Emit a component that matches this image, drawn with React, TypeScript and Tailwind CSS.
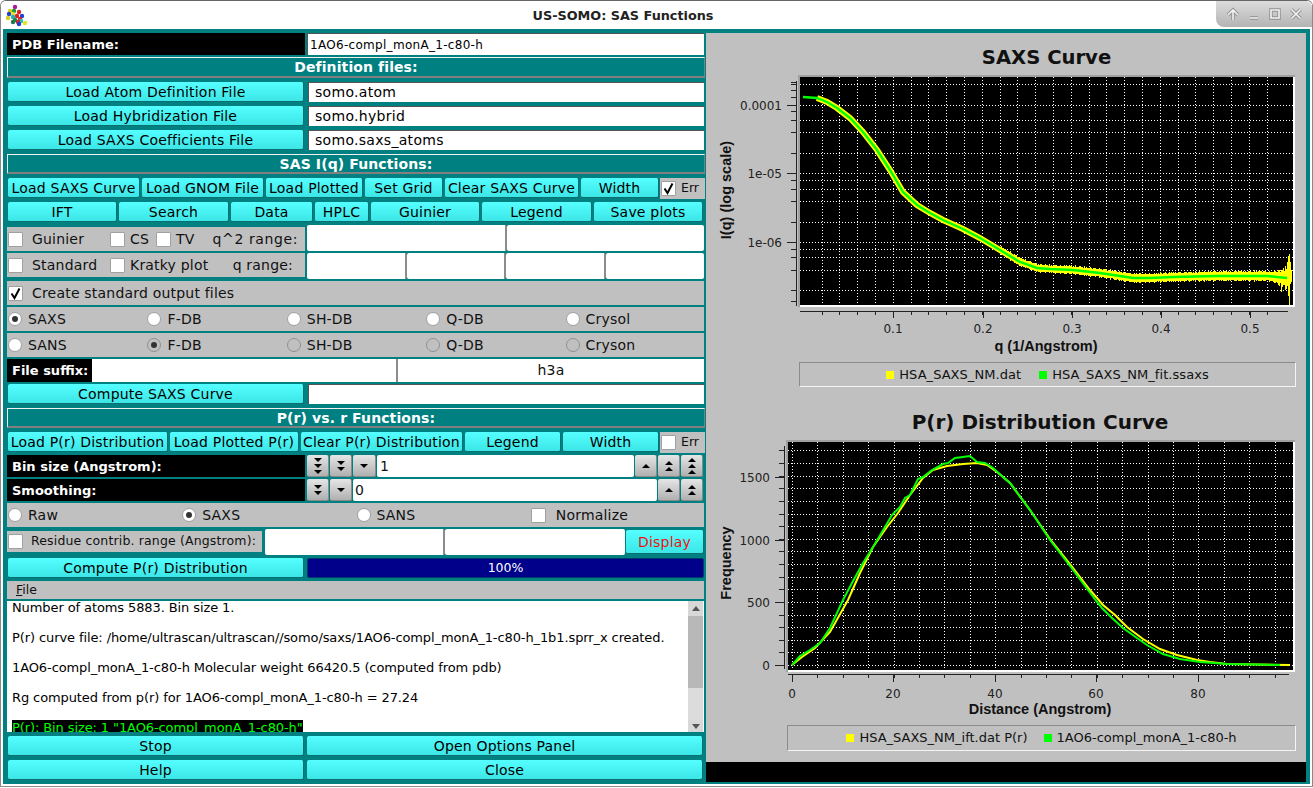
import type { ReactNode } from 'react';

const pts = (a: number[][]) => a.map((p) => p.join(',')).join(' ');

// piecewise linear lookup for the noisy band around the SAXS curve
const lerp = (a: number[][], x: number) => {
  for (let i = 1; i < a.length; i++) {
    if (x <= a[i][0]) {
      const t = (x - a[i - 1][0]) / (a[i][0] - a[i - 1][0]);
      return a[i - 1][1] + t * (a[i][1] - a[i - 1][1]);
    }
  }
  return a[a.length - 1][1];
};

const saxsFit = [
  [803, 97], [817, 98], [827, 102], [837, 108], [850, 118], [863, 132], [877, 150], [890, 170], [903, 192],
  [917, 205], [930, 213], [943, 220], [963, 229], [980, 238], [1000, 250], [1020, 262], [1037, 268], [1050, 269],
  [1073, 270], [1100, 273], [1133, 278], [1150, 278], [1173, 277], [1217, 276], [1267, 276], [1287, 278],
];

const prFit = [
  [792, 665], [800, 656], [810, 650], [820, 643], [830, 628], [843, 600], [852, 583], [863, 563], [873, 547], [882, 532],
  [892, 515], [900, 507], [905, 498], [910, 495], [918, 479], [923, 477], [932, 470], [943, 464], [948, 463], [955, 458],
  [963, 457], [970, 456], [977, 462], [985, 463], [993, 468], [1003, 477], [1010, 483], [1030, 510], [1050, 540],
  [1070, 566], [1088, 590], [1097, 602], [1102, 608], [1112, 618], [1123, 628], [1137, 638], [1147, 645], [1163, 654],
  [1180, 659], [1200, 662], [1227, 664], [1280, 665],
];

const prIft = [
  [792, 665], [802, 657], [815, 648], [830, 632], [848, 600], [860, 573], [873, 547], [887, 527], [898, 513], [910, 495],
  [923, 478], [933, 470], [947, 466], [963, 464], [977, 463], [987, 465], [997, 472], [1003, 477], [1010, 483], [1030, 510],
  [1050, 539], [1070, 564], [1090, 590], [1103, 605], [1115, 615], [1127, 627], [1143, 639], [1160, 649], [1177, 655],
  [1197, 660], [1210, 662], [1227, 664], [1290, 665],
];

const noise = Array.from({ length: 290 }, (_, i) => {
  const x = 1000 + i;
  const y = lerp(saxsFit, x);
  const amp = 3 + (i / 290) * 1.2 + Math.abs(Math.sin(i * 1.7) * Math.cos(i * 0.63)) * 1.6;
  const low = i > 272 ? Math.abs(Math.sin(i * 2.3)) * (i - 272) * 0.5 : 0;
  return { x, y1: y - amp - low * 0.6, y2: y + amp + low };
});

function Btn({ className = '', children }: { className?: string; children: ReactNode }) {
  return (
    <div
      className={`h-[20px] shrink-0 flex items-center justify-center pt-[1px] rounded-[2px] bg-linear-to-b from-[#55ffff] to-[#3de6e6] border-b border-r border-[#0b6f6f] text-[14px] tracking-[0.2px] text-black whitespace-nowrap overflow-hidden ${className}`}
    >
      {children}
    </div>
  );
}

function Field({ className = '', children }: { className?: string; children?: ReactNode }) {
  return (
    <div
      className={`flex items-center bg-white border-t border-l border-[#555] border-b-[#e8e8e8] border-r-[#e8e8e8] text-[14px] tracking-[0.3px] text-black whitespace-nowrap ${className}`}
    >
      {children}
    </div>
  );
}

// line edits separated by a QSplitter handle
function Split({ widths, h }: { widths: string[]; h: string }) {
  return (
    <div className={`flex ${h}`}>
      {widths.map((w, i) => (
        <div key={i} className={`bg-white rounded-[2px] border-r-2 border-[#8c8c8c] last:border-r-0 ${w}`} />
      ))}
    </div>
  );
}

function Check({ on = false }: { on?: boolean }) {
  return (
    <div className="w-[15px] h-[15px] shrink-0 bg-white border border-[#a0a0a0] rounded-[1px] flex items-center justify-center">
      {on && (
        <svg width="13" height="13" viewBox="0 0 13 13">
          <path d="M2.5 6.5 L5.5 11 L10.5 1.5" fill="none" stroke="#000" strokeWidth="2" />
        </svg>
      )}
    </div>
  );
}

function Radio({ on = false, off = false }: { on?: boolean; off?: boolean }) {
  return (
    <div
      className={`w-[14px] h-[14px] shrink-0 rounded-full border flex items-center justify-center ${
        off ? 'bg-[#c0c0c0] border-[#909090]' : 'bg-white border-[#a0a0a0]'
      }`}
    >
      {on && <div className="w-[6px] h-[6px] rounded-full bg-[#333]" />}
    </div>
  );
}

function RadioCell({ label, on, off }: { label: string; on?: boolean; off?: boolean }) {
  return (
    <div className="flex items-center gap-[6px] pl-[1px] text-[14px] tracking-[0.2px] text-[#111]">
      <Radio on={on} off={off} />
      {label}
    </div>
  );
}

function Header({ children, className = 'h-[20px]' }: { children: ReactNode; className?: string }) {
  return (
    <div
      className={`flex items-center justify-center pt-[1px] bg-[#008080] border-t border-l border-[#f0f0f0] border-b-2 border-r border-b-[#808080] border-r-[#808080] text-white font-bold text-[14px] tracking-[0.1px] ${className}`}
    >
      {children}
    </div>
  );
}

function Spin({ n, up = false, className = '' }: { n: number; up?: boolean; className?: string }) {
  return (
    <div
      className={`h-[22px] shrink-0 flex flex-col items-center justify-center rounded-[2px] bg-linear-to-b from-[#e6e6e6] to-[#b0b0b0] border-b border-r border-[#8a8a8a] ${className}`}
    >
      <svg width="10" height={n * 6} viewBox={`0 0 10 ${n * 6}`}>
        {Array.from({ length: n }).map((_, i) => (
          <path
            key={i}
            d={up ? `M1 ${i * 6 + 5} L5 ${i * 6 + 1} L9 ${i * 6 + 5} Z` : `M1 ${i * 6 + 1} L9 ${i * 6 + 1} L5 ${i * 6 + 5} Z`}
            fill="#000"
          />
        ))}
      </svg>
    </div>
  );
}

const dark = 'bg-black text-white font-bold text-[13px] whitespace-nowrap flex items-center';

function Molecule() {
  const balls = [
    ['#b0189a', 14, 6], ['#d8d020', 9, 10], ['#1a9a3a', 13, 10], ['#e02020', 18, 11], ['#2040d0', 8, 13], ['#e8e020', 12, 13],
    ['#e02020', 16, 15], ['#20b0c0', 12, 16], ['#d8d020', 7, 17], ['#2040d0', 21, 15], ['#e02020', 19, 18], ['#1a8a4a', 14, 19],
    ['#20c0c0', 20, 20], ['#e02020', 17, 21], ['#e8e020', 24, 22], ['#2040d0', 18, 23], ['#1a7a4a', 12, 21],
  ] as const;
  return (
    <svg width="29" height="28" viewBox="0 0 29 28" className="shrink-0">
      {balls.map(([c, x, y], i) => (
        <circle key={i} cx={x} cy={y} r="2.2" fill={c} />
      ))}
    </svg>
  );
}

function WinIcon({ d }: { d: string }) {
  return (
    <svg width="14" height="14" viewBox="0 0 14 14">
      <path d={d} fill="none" stroke="#8e8e8e" strokeWidth="3.4" />
      <path d={d} fill="none" stroke="#f4f4f4" strokeWidth="1.6" />
    </svg>
  );
}

const tick = { stroke: '#222', strokeWidth: 1, shapeRendering: 'crispEdges' as const };
const dots = { stroke: '#fff', strokeWidth: 1, strokeDasharray: '1 2', shapeRendering: 'crispEdges' as const };
const tickFont = { fontFamily: 'DejaVu Sans', fontSize: 12, fill: '#222' };
const axisFont = { fontFamily: 'Liberation Sans', fontSize: 14.5, fontWeight: 700, fill: '#111' };

function SaxsChart() {
  const decades = [105, 173.5, 242];
  const gridY = [84, 105, 120, 132, 153, 173, 180, 189, 201, 222, 242, 249, 257, 270, 290];
  const minorY = [82, 84, 90, 97, 111, 120, 132, 153, 180, 189, 201, 222, 249, 257, 270, 290, 301];
  const gridX = Array.from({ length: 26 }, (_, i) => 822 + i * 17.8);
  return (
    <svg width="600" height="286" viewBox="706 72 600 286" className="block">
      <rect x="798" y="75" width="497" height="232" fill="#fff" />
      <path d="M798 76 H1295 M799 75 V307" stroke="#a0a0a0" strokeWidth="2" />
      <rect x="800" y="77" width="493" height="228" fill="#000" />
      {gridY.map((y) => (
        <line key={y} x1="800" x2="1293" y1={y} y2={y} {...dots} />
      ))}
      {gridX.map((x) => (
        <line key={x} x1={x} x2={x} y1="77" y2="305" {...dots} />
      ))}
      <polyline points={pts(saxsFit.slice(1, 22))} fill="none" stroke="#ffff00" strokeWidth="6" />
      {noise.map((n) => (
        <line key={n.x} x1={n.x} x2={n.x} y1={n.y1} y2={n.y2} stroke="#ffff00" strokeWidth="1" shapeRendering="crispEdges" />
      ))}
      <path
        d="M1289 254 V305 M1288 256 V296 M1290 262 V284 M1287 262 V286 M1291 270 V282 M1285 266 V290 M1283 268 V284 M1281 270 V292 M1279 270 V286"
        stroke="#ffff00"
        strokeWidth="1"
        shapeRendering="crispEdges"
      />
      <polyline points={pts(saxsFit)} fill="none" stroke="#00ff00" strokeWidth="2.4" />

      <path d="M796.5 81 V306 M800 311.5 H1288" {...tick} />
      {decades.map((y) => (
        <line key={y} x1="787" x2="796" y1={y} y2={y} {...tick} />
      ))}
      {minorY.map((y) => (
        <line key={y} x1="791" x2="796" y1={y} y2={y} {...tick} />
      ))}
      {gridX.map((x) => (
        <line key={x} x1={x} x2={x} y1="311" y2="315" {...tick} />
      ))}
      {[893, 983, 1072, 1161, 1250].map((x) => (
        <line key={x} x1={x} x2={x} y1="311" y2="318" {...tick} />
      ))}
      <text x="782" y="110" textAnchor="end" {...tickFont}>0.0001</text>
      <text x="782" y="178" textAnchor="end" {...tickFont}>1e-05</text>
      <text x="782" y="247" textAnchor="end" {...tickFont}>1e-06</text>
      {['0.1', '0.2', '0.3', '0.4', '0.5'].map((l, i) => (
        <text key={l} x={[893, 983, 1072, 1161, 1250][i]} y="333" textAnchor="middle" {...tickFont}>{l}</text>
      ))}
      <text x="1046" y="351" textAnchor="middle" {...axisFont}>q (1/Angstrom)</text>
      <text transform="rotate(-90 731 190)" x="731" y="190" textAnchor="middle" {...axisFont}>I(q) (log scale)</text>
    </svg>
  );
}

function PrChart() {
  const gridY = Array.from({ length: 17 }, (_, i) => 665 - (i + 1) * 12.62).map(Math.round);
  const gridX = Array.from({ length: 19 }, (_, i) => 792 + (i + 1) * 25.4).map(Math.round);
  const major = [792, 893, 995, 1096, 1198];
  return (
    <svg width="600" height="284" viewBox="706 438 600 284" className="block">
      <rect x="786" y="440" width="509" height="232" fill="#fff" />
      <path d="M786 441 H1295 M787 440 V672" stroke="#a0a0a0" strokeWidth="2" />
      <rect x="788" y="442" width="505" height="228" fill="#000" />
      {[665, ...gridY].map((y) => (
        <line key={y} x1="788" x2="1293" y1={y} y2={y} {...dots} />
      ))}
      {[792, ...gridX].map((x) => (
        <line key={x} x1={x} x2={x} y1="442" y2="670" {...dots} />
      ))}
      <polyline points={pts(prIft)} fill="none" stroke="#ffff00" strokeWidth="2" />
      <polyline points={pts(prFit)} fill="none" stroke="#00ff00" strokeWidth="2" />

      <path d="M784.5 446 V669 M788 674.5 H1289" {...tick} />
      {gridY.map((y) => (
        <line key={y} x1="779" x2="784" y1={y} y2={y} {...tick} />
      ))}
      {[477, 540, 602, 665].map((y) => (
        <line key={y} x1="775" x2="784" y1={y} y2={y} {...tick} />
      ))}
      {gridX.map((x) => (
        <line key={x} x1={x} x2={x} y1="674" y2="678" {...tick} />
      ))}
      {major.map((x) => (
        <line key={x} x1={x} x2={x} y1="674" y2="682" {...tick} />
      ))}
      {[['1500', 477], ['1000', 540], ['500', 602], ['0', 665]].map(([l, y]) => (
        <text key={l} x="770" y={Number(y) + 5} textAnchor="end" {...tickFont}>{l}</text>
      ))}
      {['0', '20', '40', '60', '80'].map((l, i) => (
        <text key={l} x={major[i]} y="698" textAnchor="middle" {...tickFont}>{l}</text>
      ))}
      <text x="1040" y="714" textAnchor="middle" {...axisFont}>Distance (Angstrom)</text>
      <text transform="rotate(-90 731 563)" x="731" y="563" textAnchor="middle" {...axisFont}>Frequency</text>
    </svg>
  );
}

function LegendItem({ color, children }: { color: string; children: ReactNode }) {
  return (
    <div className="flex items-center gap-[5px]">
      <span className={`w-[8px] h-[8px] ${color}`} />
      {children}
    </div>
  );
}

export default function App() {
  return (
    <div className="w-[1313px] h-[787px] overflow-hidden bg-white rounded-t-[6px] border border-[#8a8a8a] border-t-[#666] font-['DejaVu_Sans',sans-serif]">
      {/* Title bar */}
      <div className="h-[28px] flex items-start bg-white">
        <Molecule />
        <div className="flex-1 pt-[5px] text-center text-[12.8px] font-bold text-[#222]">US-SOMO: SAS Functions</div>
        <div className="w-[96px] h-[26px] flex items-center justify-around px-[6px] rounded-bl-[8px] rounded-tr-[6px] bg-linear-to-b from-[#dcdcdc] to-[#b4b4b4]">
          <WinIcon d="M7 13 V3 M2 8 L7 3 L12 8" />
          <WinIcon d="M3 11 H11" />
          <WinIcon d="M3 3 H11 V11 H3 Z" />
          <WinIcon d="M2.5 2.5 L11.5 11.5 M11.5 2.5 L2.5 11.5" />
        </div>
      </div>

      {/* Teal body */}
      <div className="h-[755px] mx-[2px] flex bg-[#008080] pl-[4px] pt-[4px]">
        <div className="w-[698px] shrink-0 flex flex-col">
          <div className="flex h-[22px] gap-[2px]">
            <div className={`w-[298px] pl-[5px] pt-[1px] ${dark}`}>PDB Filename:</div>
            <Field className="w-[397px] pl-[2px] !text-[12px]">1AO6-compl_monA_1-c80-h</Field>
          </div>

          <div className="mt-[2px]">
            <Header className="h-[21px]">Definition files:</Header>
          </div>

          <div className="mt-[4px] flex flex-col gap-[4px]">
            {[
              ['Load Atom Definition File', 'somo.atom'],
              ['Load Hybridization File', 'somo.hybrid'],
              ['Load SAXS Coefficients File', 'somo.saxs_atoms'],
            ].map(([b, v]) => (
              <div key={b} className="flex gap-[4px] pl-[1px]">
                <Btn className="w-[296px]">{b}</Btn>
                <Field className="w-[396px] h-[20px] pl-[6px]">{v}</Field>
              </div>
            ))}
            <Header>SAS I(q) Functions:</Header>
            <div className="flex gap-[2px] pl-[1px] items-start">
              <Btn className="w-[132px]">Load SAXS Curve</Btn>
              <Btn className="w-[122px]">Load GNOM File</Btn>
              <Btn className="w-[97px]">Load Plotted</Btn>
              <Btn className="w-[78px]">Set Grid</Btn>
              <Btn className="w-[134px]">Clear SAXS Curve</Btn>
              <Btn className="w-[78px]">Width</Btn>
              <div className="w-[45px] h-[21px] -ml-[1px] -mb-[1px] bg-[#c0c0c0] flex items-center pl-[1px] gap-[5px] text-[12.5px] text-[#111]">
                <Check on />
                Err
              </div>
            </div>
            <div className="flex gap-[2px] pl-[1px]">
              <Btn className="w-[109px]">IFT</Btn>
              <Btn className="w-[110px]">Search</Btn>
              <Btn className="w-[82px]">Data</Btn>
              <Btn className="w-[54px]">HPLC</Btn>
              <Btn className="w-[109px]">Guinier</Btn>
              <Btn className="w-[110px]">Legend</Btn>
              <Btn className="w-[109px]">Save plots</Btn>
            </div>
          </div>

          <div className="mt-[3px] flex gap-[2px] items-start">
            <div className="mt-[2px] w-[298px] h-[24px] bg-[#c0c0c0] flex items-center pl-[1px] text-[14px] tracking-[0.2px] text-[#111]">
              <Check />
              <span className="ml-[9px] w-[78px]">Guinier</span>
              <Check />
              <span className="ml-[5px] w-[26px]">CS</span>
              <Check />
              <span className="ml-[5px]">TV</span>
              <span className="flex-1 text-right pr-[7px] whitespace-nowrap tracking-[0.6px]">q^2 range:</span>
            </div>
            <Split h="h-[26px] w-[397px]" widths={['w-[200px]', 'w-[197px]']} />
          </div>

          <div className="mt-[2px] flex gap-[2px] items-start">
            <div className="w-[298px] h-[24px] bg-[#c0c0c0] flex items-center pl-[1px] text-[14px] tracking-[0.2px] text-[#111]">
              <Check />
              <span className="ml-[9px] w-[78px]">Standard</span>
              <Check />
              <span className="ml-[5px] whitespace-nowrap">Kratky plot</span>
              <span className="flex-1 text-right pr-[12px] whitespace-nowrap">q range:</span>
            </div>
            <Split h="h-[26px] w-[397px]" widths={['w-[100px]', 'w-[99px]', 'w-[100px]', 'w-[98px]']} />
          </div>

          <div className="mt-[2px] h-[24px] w-[697px] bg-[#c0c0c0] flex items-center pl-[1px] text-[14px] tracking-[0.2px] text-[#111]">
            <Check on />
            <span className="ml-[9px]">Create standard output files</span>
          </div>

          <div className="mt-[2px] h-[24px] w-[697px] bg-[#c0c0c0] grid grid-cols-5 items-center">
            <RadioCell label="SAXS" on />
            <RadioCell label="F-DB" />
            <RadioCell label="SH-DB" />
            <RadioCell label="Q-DB" />
            <RadioCell label="Crysol" />
          </div>
          <div className="mt-[2px] h-[24px] w-[697px] bg-[#c0c0c0] grid grid-cols-5 items-center">
            <RadioCell label="SANS" />
            <RadioCell label="F-DB" on off />
            <RadioCell label="SH-DB" off />
            <RadioCell label="Q-DB" off />
            <RadioCell label="Cryson" off />
          </div>

          <div className="mt-[2px] h-[23px] flex">
            <div className={`w-[85px] pl-[5px] ${dark}`}>File suffix:</div>
            <div className="w-[306px] bg-white border-r-2 border-[#8c8c8c]" />
            <div className="w-[306px] bg-white flex items-center justify-center text-[14px] tracking-[0.2px] text-[#111]">h3a</div>
          </div>

          <div className="mt-[2px] flex gap-[4px] pl-[1px]">
            <Btn className="w-[296px]">Compute SAXS Curve</Btn>
            <Field className="w-[396px] h-[20px]" />
          </div>

          <div className="mt-[4px]">
            <Header>P(r) vs. r Functions:</Header>
          </div>

          <div className="mt-[4px] flex gap-[2px] pl-[1px] items-start">
            <Btn className="w-[160px]">Load P(r) Distribution</Btn>
            <Btn className="w-[129px]">Load Plotted P(r)</Btn>
            <Btn className="w-[162px]">Clear P(r) Distribution</Btn>
            <Btn className="w-[96px]">Legend</Btn>
            <Btn className="w-[96px]">Width</Btn>
            <div className="w-[45px] h-[21px] -ml-[1px] -mb-[1px] bg-[#c0c0c0] flex items-center pl-[1px] gap-[5px] text-[12.5px] text-[#111]">
              <Check />
              Err
            </div>
          </div>

          <div className="mt-[3px] h-[22px] flex gap-[1px]">
            <div className={`w-[298px] mr-[1px] pl-[5px] pt-[1px] ${dark}`}>Bin size (Angstrom):</div>
            <Spin n={3} className="w-[22px]" />
            <Spin n={2} className="w-[22px]" />
            <Spin n={1} className="w-[23px]" />
            <div className="w-[257px] bg-white rounded-[2px] flex items-center pl-[3px] text-[14px] text-[#111]">1</div>
            <Spin n={1} up className="w-[22px]" />
            <Spin n={2} up className="w-[22px]" />
            <Spin n={3} up className="w-[22px]" />
          </div>
          <div className="mt-[2px] h-[22px] flex gap-[1px]">
            <div className={`w-[298px] mr-[1px] pl-[5px] pt-[1px] ${dark}`}>Smoothing:</div>
            <Spin n={2} className="w-[22px]" />
            <Spin n={1} className="w-[22px]" />
            <div className="w-[304px] bg-white rounded-[2px] flex items-center pl-[2px] text-[14px] text-[#111]">0</div>
            <Spin n={1} up className="w-[22px]" />
            <Spin n={2} up className="w-[22px]" />
          </div>

          <div className="mt-[2px] h-[24px] w-[697px] bg-[#c0c0c0] grid grid-cols-4 items-center">
            <RadioCell label="Raw" />
            <RadioCell label="SAXS" on />
            <RadioCell label="SANS" />
            <div className="flex items-center pl-[1px] text-[14px] tracking-[0.2px] text-[#111]">
              <Check />
              <span className="ml-[10px]">Normalize</span>
            </div>
          </div>

          <div className="mt-[2px] h-[26px] flex items-start">
            <div className="mt-[2px] w-[255px] h-[21px] bg-[#c0c0c0] flex items-center pl-[1px] text-[12.5px] tracking-[0.15px] text-[#111] whitespace-nowrap">
              <Check />
              <span className="ml-[8px]">Residue contrib. range (Angstrom):</span>
            </div>
            <Split h="ml-[3px] h-[26px] w-[360px]" widths={['w-[180px]', 'w-[180px]']} />
            <Btn className="ml-[1px] mt-[1px] !h-[24px] w-[78px] !text-[#f01010]">Display</Btn>
          </div>

          <div className="mt-[3px] flex gap-[3px] pl-[1px]">
            <Btn className="w-[296px]">Compute P(r) Distribution</Btn>
            <div className="w-[397px] h-[20px] bg-[#00008b] border border-[#003a6a] rounded-[2px] flex items-center justify-center text-white text-[12.5px]">
              100%
            </div>
          </div>

          <div className="mt-[3px] h-[18px] w-[697px] bg-[#c0c0c0] flex items-center pl-[9px] text-[12.5px] text-[#111]">
            <span><span className="underline">F</span>ile</span>
          </div>

          <div className="mt-[2px] h-[131px] w-[697px] flex bg-white overflow-hidden">
            <div className="flex-1 pl-[5px] -mt-[1px] text-[13px] leading-[15px] tracking-[-0.1px] text-black whitespace-nowrap">
              <div className="h-[30px]">Number of atoms 5883. Bin size 1.</div>
              <div className="h-[30px]">P(r) curve file: /home/ultrascan/ultrascan//somo/saxs/1AO6-compl_monA_1-c80-h_1b1.sprr_x created.</div>
              <div className="h-[30px]">1AO6-compl_monA_1-c80-h Molecular weight 66420.5 (computed from pdb)</div>
              <div className="h-[30px]">Rg computed from p(r) for 1AO6-compl_monA_1-c80-h = 27.24</div>
              <div><span className="bg-black text-[#00ff00]">P(r): Bin size: 1 "1AO6-compl_monA_1-c80-h"</span></div>
            </div>
            <div className="w-[15px] mr-[1px] flex flex-col bg-[#dcdcdc]">
              <div className="h-[15px] bg-[#d8d8d8] flex items-center justify-center">
                <svg width="8" height="5" viewBox="0 0 8 5"><path d="M0 5 L4 0 L8 5 Z" fill="#555" /></svg>
              </div>
              <div className="h-[72px] bg-[#b8b8b8]" />
              <div className="flex-1" />
              <div className="h-[12px] bg-[#d8d8d8] flex items-center justify-center">
                <svg width="8" height="5" viewBox="0 0 8 5"><path d="M0 0 L8 0 L4 5 Z" fill="#555" /></svg>
              </div>
            </div>
          </div>

          <div className="mt-[4px] flex gap-[3px] pl-[1px]">
            <Btn className="w-[296px]">Stop</Btn>
            <Btn className="w-[396px]">Open Options Panel</Btn>
          </div>
          <div className="mt-[4px] flex gap-[3px] pl-[1px]">
            <Btn className="w-[296px]">Help</Btn>
            <Btn className="w-[396px]">Close</Btn>
          </div>
        </div>

        {/* Plots */}
        <div className="w-[600px] h-[749px] ml-[1px] flex flex-col bg-[#c0c0c0]">
          <div className="h-[39px] pt-[12px] pl-[81px] text-center text-[19.6px] leading-[26px] font-bold text-[#111]">SAXS Curve</div>
          <SaxsChart />
          <div className="mt-[4px] ml-[93px] w-[497px] h-[25px] flex items-center justify-center gap-[18px] border border-[#f4f4f4] border-t-[#8c8c8c] border-l-[#8c8c8c] text-[13px] tracking-[0.05px] text-[#111]">
            <LegendItem color="bg-[#ffff00]">HSA_SAXS_NM.dat</LegendItem>
            <LegendItem color="bg-[#00ff00]">HSA_SAXS_NM_fit.ssaxs</LegendItem>
          </div>
          <div className="h-[51px] pt-[22px] pl-[68px] text-center text-[20px] leading-[26px] font-bold text-[#111]">P(r) Distribution Curve</div>
          <PrChart />
          <div className="mt-[3px] ml-[81px] w-[509px] h-[26px] flex items-center justify-center gap-[16px] border border-[#f4f4f4] border-t-[#8c8c8c] border-l-[#8c8c8c] text-[13px] text-[#111]">
            <LegendItem color="bg-[#ffff00]">HSA_SAXS_NM_ift.dat P(r)</LegendItem>
            <LegendItem color="bg-[#00ff00]">1AO6-compl_monA_1-c80-h</LegendItem>
          </div>
          <div className="mt-auto h-[20px] bg-black" />
        </div>
      </div>
    </div>
  );
}
